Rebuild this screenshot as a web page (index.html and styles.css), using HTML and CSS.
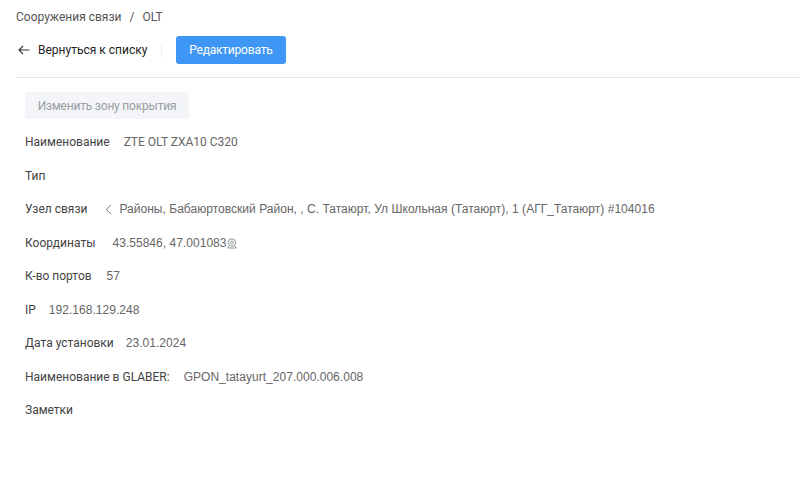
FILE: index.html
```html
<!DOCTYPE html>
<html lang="ru">
<head>
<meta charset="utf-8">
<title>OLT</title>
<link rel="stylesheet" href="styles.css">
</head>
<body>
<div class="header">
  <div class="crumbs"><span>Сооружения связи</span><span class="sep">/</span><span>OLT</span></div>
  <div class="toolbar">
    <a class="back">
      <svg class="arrow" width="12" height="10" viewBox="0 0 12 10"><path d="M5 1 1 5l4 4M1 5h10.500" fill="none" stroke="#333" stroke-width="1.100"/></svg>
      <span>Вернуться к списку</span>
    </a>
    <span class="divider"></span>
    <button class="primary">Редактировать</button>
  </div>
</div>
<div class="content">
  <button class="disabled">Изменить зону покрытия</button>
  <div class="rows">
    <div class="row"><span class="label">Наименование</span><span class="value name">ZTE OLT ZXA10 C320</span></div>
    <div class="row"><span class="label">Тип</span></div>
    <div class="row"><span class="label">Узел связи</span>
      <svg class="chev" width="7" height="11" viewBox="0 0 7 11"><path d="M6 1 1.200 5.500 6 10" fill="none" stroke="#777" stroke-width="1"/></svg>
      <span class="value">Районы, Бабаюртовский Район, , С. Татаюрт, Ул Школьная (Татаюрт), 1 (АГГ_Татаюрт) #104016</span></div>
    <div class="row"><span class="label wide">Координаты</span><span class="value">43.55846, 47.001083</span>
      <svg class="pin" width="10" height="11" viewBox="0 0 10 11"><circle cx="5" cy="4.500" r="3.700" fill="none" stroke="#777" stroke-width=".8"/><circle cx="5" cy="4.500" r="1.400" fill="none" stroke="#777" stroke-width=".8"/><path d="M2 8 .8 10h8.400L8 8" fill="none" stroke="#777" stroke-width=".8"/></svg></div>
    <div class="row"><span class="label ports">К-во портов</span><span class="value">57</span></div>
    <div class="row"><span class="label">IP</span><span class="value">192.168.129.248</span></div>
    <div class="row"><span class="label tight">Дата установки</span><span class="value">23.01.2024</span></div>
    <div class="row"><span class="label mid">Наименование в GLABER:</span><span class="value">GPON_tatayurt_207.000.006.008</span></div>
    <div class="row"><span class="label">Заметки</span></div>
  </div>
</div>
</body>
</html>
```
FILE: styles.css
```css
* { box-sizing: border-box; }
html, body { margin: 0; padding: 0; background: #fff; }
body { width: 800px; height: 484px; overflow: hidden; font-family: "Roboto", "Liberation Sans", sans-serif; font-size: 12px; color: #333; }
.header { margin: 0 0 0 16px; height: 78px; border-bottom: 1px solid #e6e8ec; padding-top: 10px; }
.crumbs { display: flex; gap: 8px; height: 14px; line-height: 14px; color: #555; }
.toolbar { display: flex; align-items: center; margin-top: 12px; height: 28px; }
.back { display: flex; align-items: center; gap: 8px; padding-left: 2px; color: #222; }
.divider { width: 1px; height: 14px; background: #eceef1; margin: 0 14px; }
.primary { width: 110px; height: 28px; border: 0; border-radius: 3px; background: #3e97f4; color: #fff; font: inherit; letter-spacing: -0.2px; padding: 0 1px 0 0; }
.content { padding: 14px 0 0 25px; }
.disabled { display: block; width: 164px; height: 27px; border: 0; border-radius: 3px; background: #f4f5f8; color: #9a9da3; font: inherit; letter-spacing: -0.2px; padding: 0; }
.rows { margin-top: 6.500px; }
.row { display: flex; align-items: center; height: 33.500px; }
.label { color: #444; margin-right: 13px; }
.label.tight { margin-right: 12px; }
.label.mid { margin-right: 14px; }
.label.ports { margin-right: 15px; }
.label.wide { margin-right: 17px; }
.value { font-family: "Liberation Sans", sans-serif; color: #666; letter-spacing: 0.03px; }
.value.name { font-family: "Roboto", sans-serif; margin-left: 1px; letter-spacing: 0; }
.chev { margin: 0 7px 0 5px; }
.pin { margin-top: 2px; }
```
